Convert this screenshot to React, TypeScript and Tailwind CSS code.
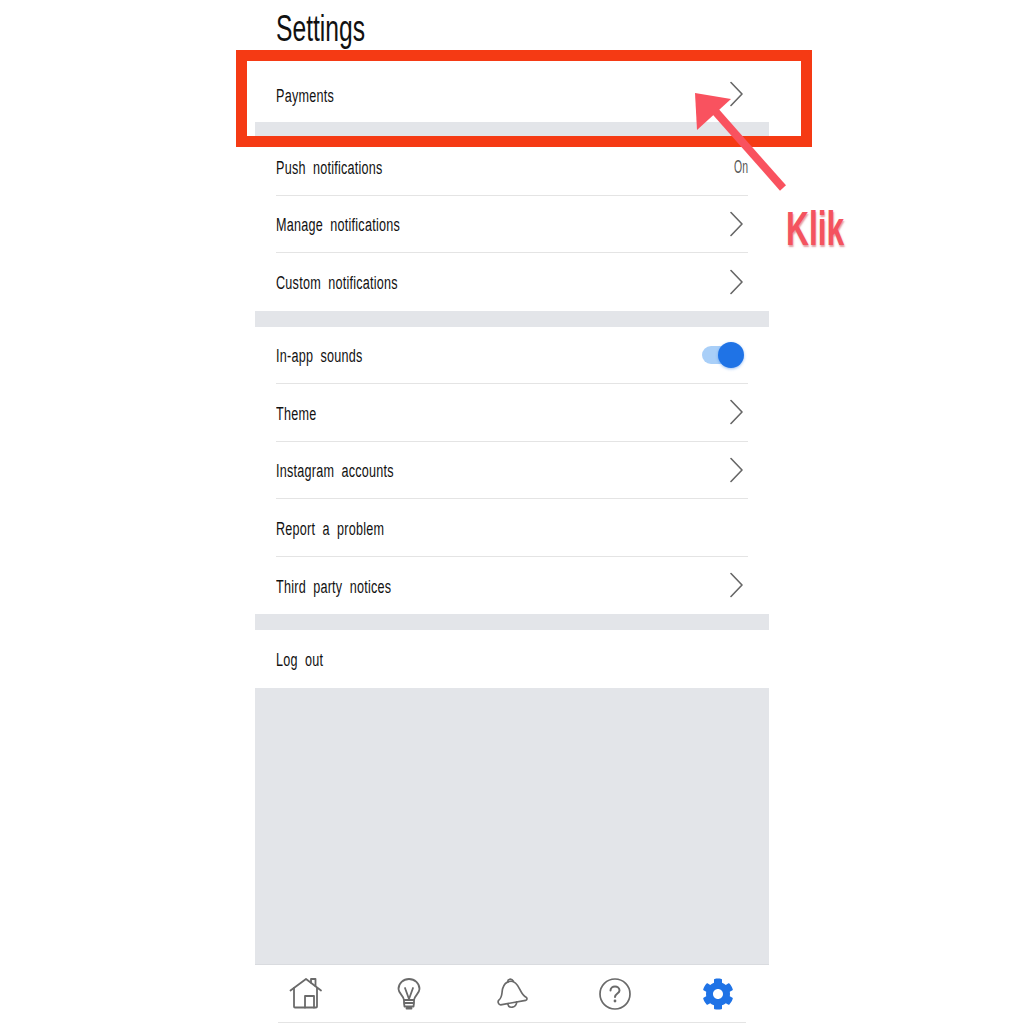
import React from "react";
import { FaCog } from "react-icons/fa";

const font = { fontFamily: '"Liberation Sans", sans-serif' };

function Chevron() {
  return (
    <svg width="14" height="26" viewBox="0 0 14 26" fill="none" stroke="#666" strokeWidth="1.6" strokeLinecap="round" strokeLinejoin="round" className="mr-[1px]">
      <path d="M1 1.5 L12 13 L1 24.5" />
    </svg>
  );
}

function Toggle() {
  return (
    <div className="relative w-[42px] h-[26px] mr-[1px]">
      <div className="absolute left-0 top-[4px] w-[34px] h-[18px] rounded-full bg-[#a9cff8]" />
      <div className="absolute right-0 top-0 w-[26px] h-[26px] rounded-full bg-[#1f73e6] shadow-[0_1px_3px_rgba(31,115,230,0.45)]" />
    </div>
  );
}

function Row({ label, right, last, h = "h-[57.5px]" }: { label: string; right?: React.ReactNode; last?: boolean; h?: string }) {
  return (
    <div className={`${h} mx-[21px] flex items-center justify-between ${last ? "" : "border-b border-[#e4e4e4]"}`}>
      <span className="inline-block origin-left scale-x-[0.7] text-[18px] leading-[24px] pt-[3px] text-[#111] whitespace-nowrap tracking-[0.35px] [word-spacing:5px]">{label}</span>
      {right && <div className="flex items-center pr-[3px]">{right}</div>}
    </div>
  );
}

const Gap = () => <div className="h-[16px] bg-[#e3e5e9]" />;

function Home() {
  return (
    <svg width="34" height="34" viewBox="0 0 34 34" fill="none" stroke="#6a6a6a" strokeWidth="1.8" strokeLinejoin="round" strokeLinecap="round">
      <path d="M1.5 13.5 L17 2 L32 13.5" />
      <path d="M5 11 V29.5 a1 1 0 0 0 1 1 H27 a1 1 0 0 0 1 -1 V11" />
      <path d="M22 5.5 V2 H26.5 V9" />
      <path d="M16 30.5 V19 H25 V30.5" />
    </svg>
  );
}

function Bulb() {
  return (
    <svg width="24" height="32" viewBox="0 0 24 32" fill="none" stroke="#6a6a6a" strokeWidth="1.8" strokeLinejoin="round" strokeLinecap="round">
      <path d="M7 22 C7 18 1.5 15.5 1.5 11 A10.5 10 0 0 1 22.5 11 C22.5 15.5 17 18 17 22 Z" />
      <path d="M8 10 L12 21 L16 10" />
      <path d="M7 22.5 V25 H17 V22.5 M7 25 L7.5 28.5 H16.5 L17 25 M9.5 30.5 H14.5" />
    </svg>
  );
}

function Bell() {
  return (
    <svg width="32" height="33" viewBox="0 0 34 34" fill="none" stroke="#6a6a6a" strokeWidth="1.8" strokeLinejoin="round" strokeLinecap="round">
      <path d="M3 24 C7 21 6 16 7 12 C8.5 6.5 12 4 16 4 C20 4 22.5 7 25 12 C27 16 28.5 19.5 32 21 C33.5 22 33 24 31.5 24.3 L5 29 C2.5 29 1.5 25.5 3 24 Z" />
      <path d="M12.5 5 C12 1.5 16.5 0.5 18.5 4" />
      <path d="M12.5 28 C13.5 33.5 21.5 32.5 22 26" />
    </svg>
  );
}

function Help() {
  return (
    <svg width="32" height="32" viewBox="0 0 32 32" fill="none" stroke="#6a6a6a" strokeWidth="1.7" strokeLinecap="round" strokeLinejoin="round">
      <circle cx="16" cy="16" r="15" />
      <path d="M11.5 12.5 C11.5 7 20.5 7 20.5 12.5 C20.5 15.5 16 15.5 16 19" strokeWidth="2" />
      <circle cx="16" cy="23" r="0.7" fill="#6a6a6a" strokeWidth="1.4" />
    </svg>
  );
}

export default function App() {
  return (
    <div className="relative w-[1024px] h-[1024px] bg-white overflow-hidden" style={font}>
      <div className="w-[514px] ml-[255px] h-full flex flex-col">
        <div className="h-[66px] pl-[21px] pt-[7px] text-[#111]">
          <span className="inline-block origin-left scale-x-[0.685] text-[36px] leading-[44px]">Settings</span>
        </div>
        <Row label="Payments" last h="h-[56px]" right={<Chevron />} />
        <Gap />
        <Row label="Push notifications" right={<span className="inline-block origin-right scale-x-[0.58] text-[18px] pt-[3px] text-[#555] translate-x-[3px]">On</span>} />
        <Row label="Manage notifications" right={<Chevron />} />
        <Row label="Custom notifications" last right={<Chevron />} />
        <Gap />
        <Row label="In-app sounds" right={<Toggle />} />
        <Row label="Theme" right={<Chevron />} />
        <Row label="Instagram accounts" right={<Chevron />} />
        <Row label="Report a problem" />
        <Row label="Third party notices" last right={<Chevron />} />
        <Gap />
        <Row label="Log out" last />
        <div className="flex-1 bg-[#e3e5e9] border-b border-[#d9dbdf]" />
        <div className="h-[57px] grid grid-cols-5 items-center justify-items-center">
          <Home />
          <Bulb />
          <Bell />
          <Help />
          <FaCog className="text-[#1f73e6] w-[32px] h-[32px]" />
        </div>
        <div className="h-px mx-[23px] mb-[1px] bg-[#e4e4e4]" />
      </div>

      <div className="absolute left-[236px] top-[50px] w-[576px] h-[97px] border-[11px] border-[#f53a14]" />
      <svg className="absolute left-[680px] top-[80px]" width="120" height="120" viewBox="0 0 120 120">
        <path d="M103 108 L35 31" stroke="#f9525f" strokeWidth="8" />
        <path d="M15 13 L51 19 L17 50 Z" fill="#f9525f" />
      </svg>
      <div className="absolute left-[786px] top-[202px] inline-block origin-left scale-x-[0.66] text-[48px] leading-[54px] font-bold text-[#f4535f] [text-shadow:1px_2px_2px_rgba(200,60,70,0.5)]">Klik</div>
    </div>
  );
}
